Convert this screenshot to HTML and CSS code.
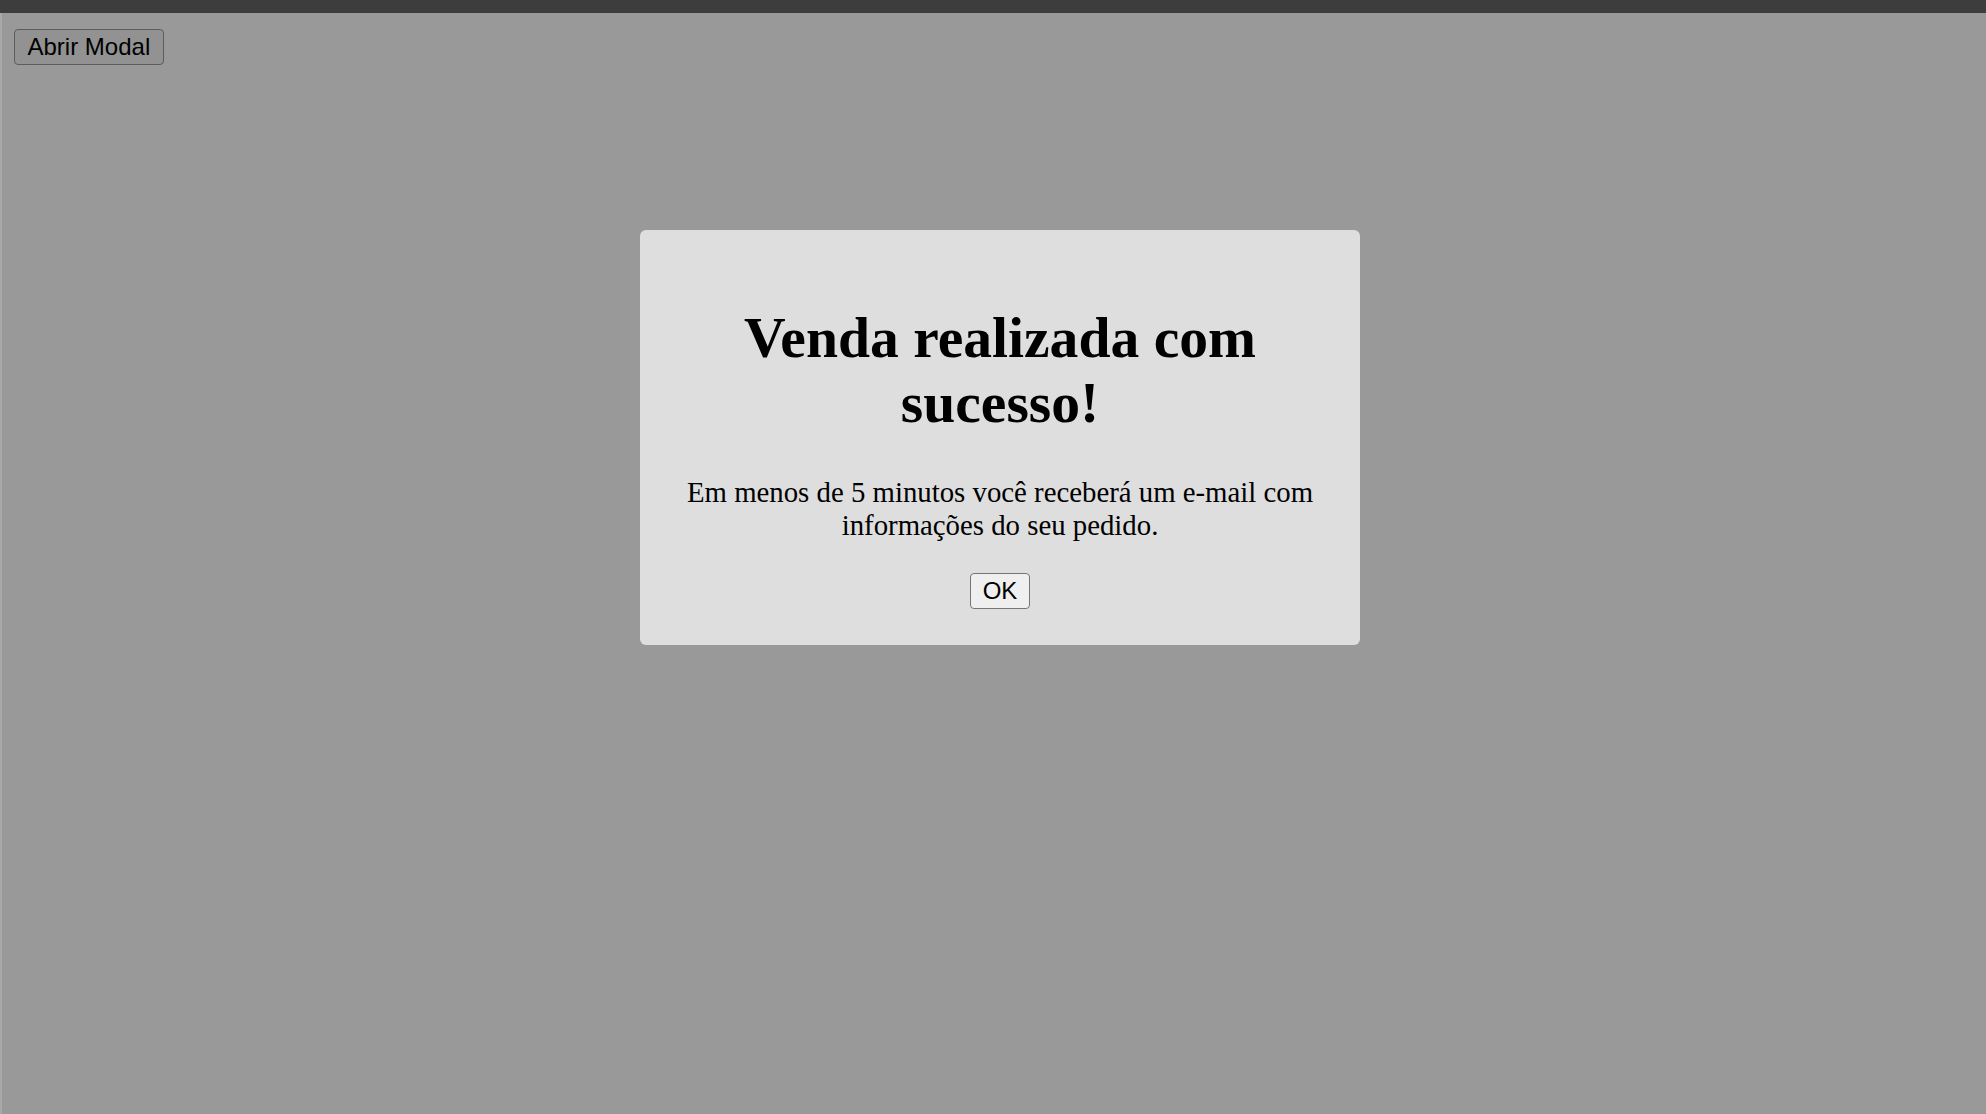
FILE: index.html
```html
<!DOCTYPE html>
<html lang="pt-BR">
<head>
<meta charset="utf-8">
<title>Modal</title>
<link rel="stylesheet" href="styles.css">
</head>
<body>
<div class="topbar"></div>
<main class="page">
  <button class="btn open-btn" type="button">Abrir Modal</button>
</main>
<div class="overlay">
  <div class="modal">
    <h1 class="modal-title">Venda realizada com sucesso!</h1>
    <p class="modal-text">Em menos de 5 minutos você receberá um e-mail com informações do seu pedido.</p>
    <div class="modal-actions">
      <button class="btn ok-btn" type="button">OK</button>
    </div>
  </div>
</div>
</body>
</html>
```
FILE: styles.css
```css
html, body {
  margin: 0;
  padding: 0;
  height: 100%;
}
body {
  background: #999999;
  font-family: "Liberation Serif", "Times New Roman", serif;
  color: #000;
  display: flex;
  flex-direction: column;
}
.topbar {
  height: 13px;
  background: #3d3d3d;
  flex: none;
}
.page {
  flex: 1;
  border-left: 2px solid #a8a8a8;
  padding: 16px 12px;
}
.btn {
  font-family: "Liberation Sans", Arial, sans-serif;
  font-size: 24px;
  line-height: normal;
  color: #000;
  border-radius: 4px;
  margin: 0;
  cursor: pointer;
}
.open-btn {
  background: #929292;
  border: 1.8px solid #5c5c5c;
  padding: 3px 12.5px;
}
.overlay {
  position: fixed;
  inset: 12px 0 0 0;
  display: flex;
  justify-content: center;
  align-items: flex-start;
  padding: 218px 0 0 14px;
}
.modal {
  width: 648px;
  padding: 36px;
  background: #dedede;
  border-radius: 6px;
  text-align: center;
}
.modal-title {
  font-size: 57.6px;
  font-weight: bold;
  line-height: normal;
  margin: 38.6px 0 41.5px;
}
.modal-text {
  font-size: 28.8px;
  line-height: normal;
  margin: 28.8px 0 30.5px;
}
.modal-actions {
  display: flex;
  justify-content: center;
}
.ok-btn {
  background: #efefef;
  border: 1.8px solid #767676;
  padding: 3px 11.5px;
}
```
